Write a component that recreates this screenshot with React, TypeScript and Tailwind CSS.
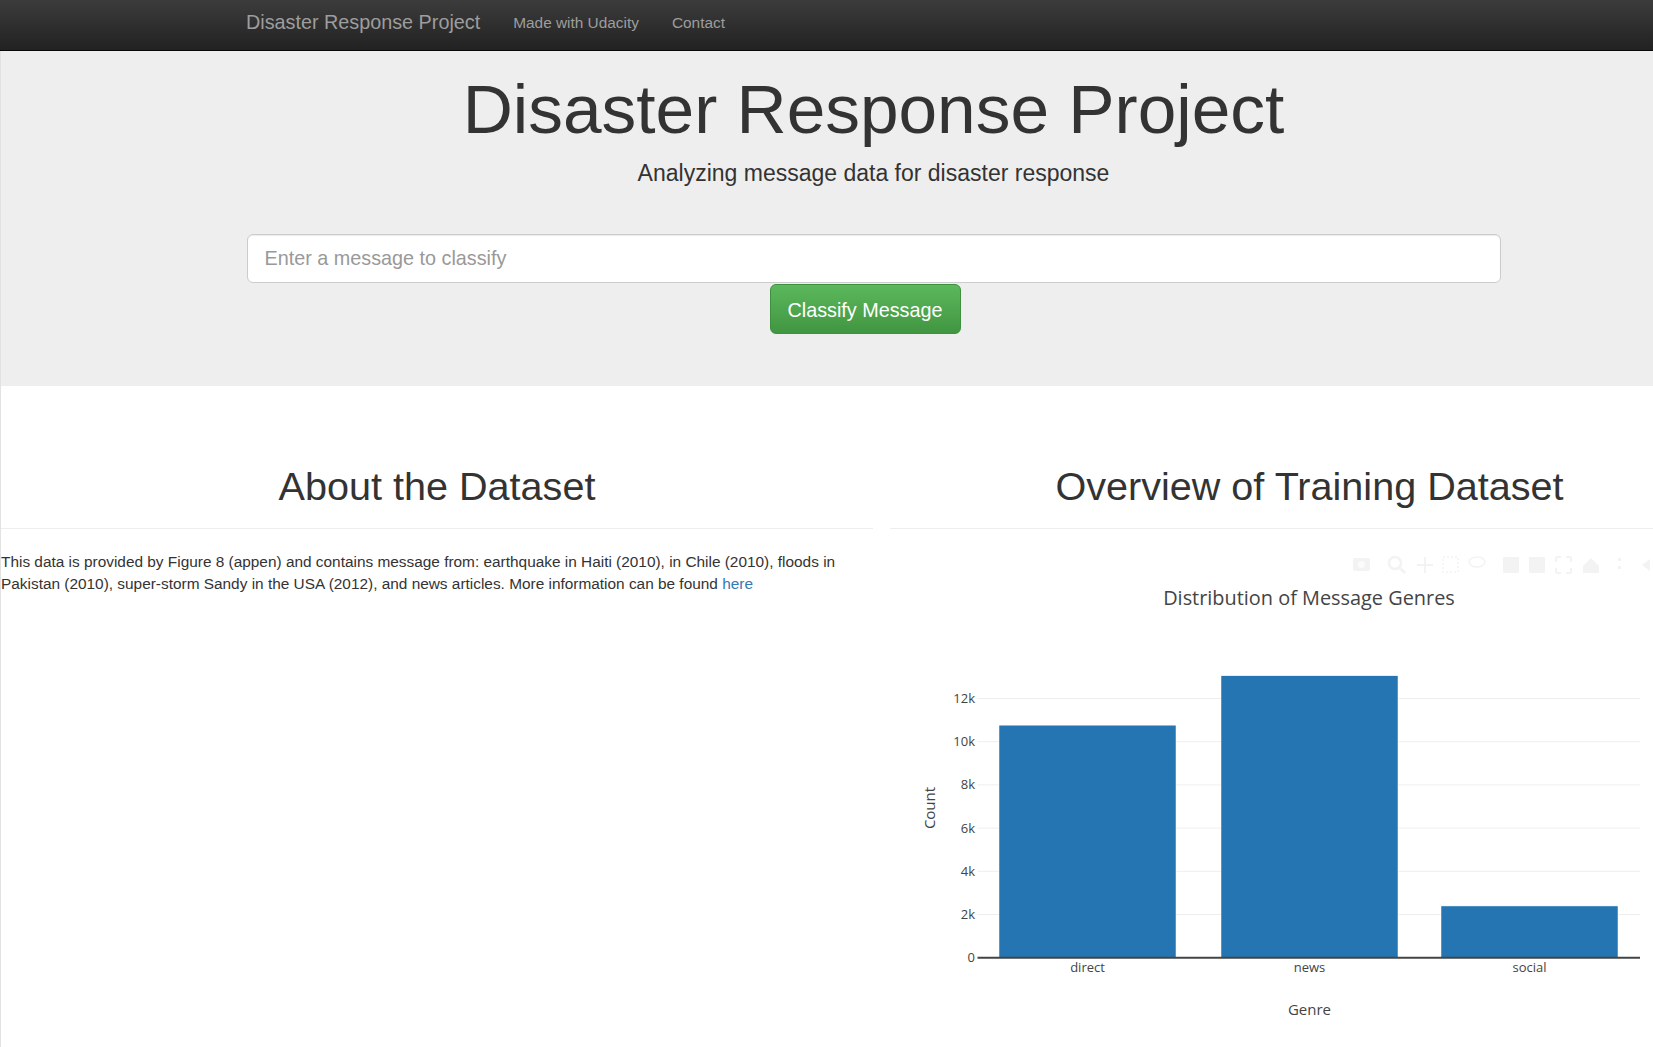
import React from "react";

const genres = [
  { name: "direct", count: 10766, x: 109 },
  { name: "news", count: 13054, x: 331 },
  { name: "social", count: 2396, x: 551 },
];

const ticks = [0, 2, 4, 6, 8, 10, 12];

// y pixel for a count inside the chart svg
function yOf(v: number) {
  return 407.7 - v * 0.0216;
}

function ModeBar() {
  const c = "#f3f3f3";
  return (
    <g fill={c} stroke={c}>
      {/* camera */}
      <rect x="463" y="8" width="17" height="13" rx="2" stroke="none" />
      <circle cx="471.5" cy="14.5" r="3.5" fill="#fbfbfb" stroke="none" />
      {/* zoom */}
      <circle cx="505" cy="13" r="6" fill="none" strokeWidth="2.5" />
      <line x1="509" y1="17" x2="515" y2="23" strokeWidth="3" />
      {/* pan */}
      <line x1="535" y1="7" x2="535" y2="23" strokeWidth="2" />
      <line x1="527" y1="15" x2="543" y2="15" strokeWidth="2" />
      {/* box select */}
      <rect x="553" y="7" width="15" height="15" fill="none" strokeWidth="1.5" strokeDasharray="2 2" />
      {/* lasso */}
      <ellipse cx="587" cy="12" rx="8" ry="5" fill="none" strokeWidth="1.5" />
      {/* zoom in / out */}
      <rect x="613" y="7" width="16" height="16" rx="1" stroke="none" />
      <rect x="639" y="7" width="16" height="16" rx="1" stroke="none" />
      {/* autoscale */}
      <path d="M666 7 l5 0 M666 7 l0 5 M681 7 l-5 0 M681 7 l0 5 M666 23 l5 0 M666 23 l0 -5 M681 23 l-5 0 M681 23 l0 -5" fill="none" strokeWidth="2" />
      {/* home */}
      <path d="M693 16 l8 -8 l8 8 l0 7 l-16 0 z" stroke="none" />
      {/* spikes / hover */}
      <rect x="728" y="8" width="3" height="3" stroke="none" />
      <rect x="728" y="16" width="3" height="3" stroke="none" />
      <path d="M752 15 l8 -6 l0 12 z" stroke="none" />
    </g>
  );
}

function GenreChart() {
  return (
    <svg width="840" height="497" className="block" style={{ fontFamily: "'Open Sans', 'DejaVu Sans', sans-serif" }}>
      <ModeBar />
      <text x="419" y="55" textAnchor="middle" fontSize="19.9" fill="#444">
        Distribution of Message Genres
      </text>
      {ticks.map((t) =>
        t === 0 ? null : (
          <line key={t} x1="87.5" x2="750" y1={yOf(t * 1000)} y2={yOf(t * 1000)} stroke="#eee" strokeWidth="1" />
        )
      )}
      {ticks.map((t) => (
        <text key={t} x="85" y={yOf(t * 1000) + 4.5} textAnchor="end" fontSize="13" fill="#444">
          {t === 0 ? "0" : t + "k"}
        </text>
      ))}
      {genres.map((g) => (
        <g key={g.name}>
          <rect x={g.x} y={yOf(g.count)} width="177" height={407.7 - yOf(g.count)} fill="#2475b1" stroke="#fff" strokeWidth="0.5" />
          <text x={g.x + 88.5} y="421.5" textAnchor="middle" fontSize="13" fill="#444">
            {g.name}
          </text>
        </g>
      ))}
      <line x1="87.5" x2="750" y1="407.7" y2="407.7" stroke="#444" strokeWidth="2" />
      <text x="419.5" y="464.5" textAnchor="middle" fontSize="15" fill="#444">
        Genre
      </text>
      <text x="0" y="0" transform="translate(45 258) rotate(-90)" textAnchor="middle" fontSize="15" fill="#444">
        Count
      </text>
    </svg>
  );
}

export default function App() {
  return (
    <div className="w-[1653px] min-h-[1047px] overflow-hidden bg-white text-[#333]" style={{ fontFamily: "'Liberation Sans', Arial, sans-serif" }}>
      <div className="w-[1746px]">
        <div className="h-[51px] border-b border-[#080808] bg-gradient-to-b from-[#3c3c3c] to-[#222]">
          <div className="mx-auto flex h-full w-[1287px] items-center px-[16.5px] pb-[4px]">
            <span className="text-[19.8px] text-[#9d9d9d]">Disaster Response Project</span>
            <span className="ml-[33px] text-[15.4px] text-[#9d9d9d]">Made with Udacity</span>
            <span className="ml-[33px] text-[15.4px] text-[#9d9d9d]">Contact</span>
          </div>
        </div>

        <div className="border-l border-[#e2e2e2]">
          <div className="bg-[#eee] pb-[52px]">
            <div className="mx-auto w-[1287px] px-[16.5px]">
              <h1 className="pt-[20px] text-center text-[69.4px] leading-[76px] text-[#333]">Disaster Response Project</h1>
              <p className="mt-[10px] text-center text-[23px] leading-[32px] text-[#333]">Analyzing message data for disaster response</p>
              <input
                className="mt-[45px] block h-[49px] w-full rounded-[6px] border border-[#ccc] bg-white px-[17px] text-[19.8px] text-[#555] placeholder:text-[#999] shadow-[inset_0_1px_1px_rgba(0,0,0,0.075)] outline-none"
                placeholder="Enter a message to classify"
              />
              <button className="ml-[523px] mt-[1px] h-[50px] w-[191px] rounded-[6px] border border-[#3e8f3e] bg-gradient-to-b from-[#5cb85c] to-[#419641] pt-[3px] text-[19.8px] text-white">
                Classify Message
              </button>
            </div>
          </div>

          <div className="flex">
            <div className="w-[873px]">
              <h1 className="mt-[78px] text-center text-[39.6px] leading-[44px]">About the Dataset</h1>
              <div className="mt-[20px] border-t border-[#eee]" />
              <p className="mt-[22px] text-[15.4px] leading-[22px]">
                This data is provided by Figure 8 (appen) and contains message from: earthquake in Haiti (2010), in Chile (2010), floods in Pakistan (2010), super-storm Sandy in the USA (2012), and news articles. More information can be found <a className="text-[#337ab7]">here</a>
              </p>
            </div>
            <div className="w-[873px] px-[16.5px]">
              <h1 className="mt-[78px] text-center text-[39.6px] leading-[44px]">Overview of Training Dataset</h1>
              <div className="mt-[20px] border-t border-[#eee]" />
              <div className="mt-[21px]">
                <GenreChart />
              </div>
            </div>
          </div>
        </div>
      </div>
    </div>
  );
}
